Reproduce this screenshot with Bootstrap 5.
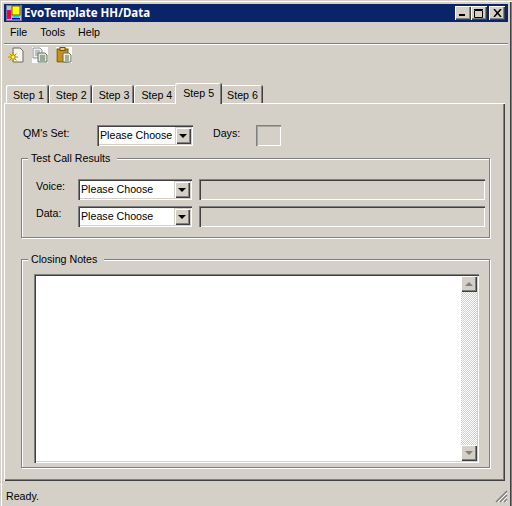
<!DOCTYPE html>
<html lang="en">
<head>
  <meta charset="UTF-8">
  <title>EvoTemplate HH/Data</title>
  <link href="https://cdn.jsdelivr.net/npm/bootstrap@5.3.3/dist/css/bootstrap.min.css" rel="stylesheet">
  <style>
    html, body { margin: 0; background: #d4d0c8; overflow: hidden; }
    body { font: 10.67px/14px "Liberation Sans", Arial, sans-serif; color: #000; }
    .win { width: 512px; height: 506px; padding: 4px 4px 0; background: #d4d0c8; box-shadow: inset 1px 1px #d4d0c8, inset 2px 2px #fff, inset -1px 0 #808080, inset -2px 0 #404040; }
    .titlebar { height: 18px; background: #0a246a; color: #fff; font: bold 11.5px/18px "Noto Sans", sans-serif; padding: 0 3px 0 2px; }
    .appicon { flex: none; margin-right: 2px; }
    .capbtn { width: 16px; height: 14px; background: #d4d0c8; box-shadow: inset 1px 1px #fff, inset -1px -1px #404040, inset -2px -2px #808080; }
    .capgap { margin-left: 2px; }
    .menubar { height: 22px; padding-top: 1px; box-shadow: 0 1px #fff, inset 0 -1px #808080; }
    .menubar span { padding: 0 6px; margin-right: 1px; line-height: 19px; }
    .toolbar { height: 39px; padding: 3px 0 0 4px; gap: 8px; }
    .toolbar svg { display: block; }
    .tabstrip { height: 20px; padding-left: 2px; align-items: flex-end; position: relative; z-index: 1; }
    .stab { height: 18px; padding: 3px 4px 0 7px; border-radius: 2px 2px 0 0; margin-right: 1px; box-shadow: inset 1px 1px #fff, inset -1px 0 #808080, 1px 0 #404040; line-height: 15px; }
    .stab.on { height: 21px; padding: 3px 7px 0 8px; margin: 0 -1px -1px -2px; background: #d4d0c8; position: relative; z-index: 1; }
    .tabpanel { width: 501px; height: 378px; padding: 22px 0 0 17px; box-shadow: inset 1px 1px #fff, inset -1px -1px #404040, inset -2px -2px #808080; }
    .toprow { margin-left: 2px; }
    .flabel { flex: none; padding-top: 1px; }
    .combo { height: 21px; background: #fff; padding: 2px 2px 2px 3px; line-height: 17px; white-space: nowrap; box-shadow: inset 1px 1px #808080, inset 2px 2px #404040, inset -1px -1px #fff, inset -2px -2px #d4d0c8; }
    .dropbtn { width: 16px; height: 17px; background: #d4d0c8; box-shadow: inset 1px 1px #d4d0c8, inset 2px 2px #fff, inset -1px -1px #404040, inset -2px -2px #808080; }
    .tri-d { width: 0; height: 0; border: 4px solid transparent; border-top-color: #000; border-bottom: 0; }
    .sunken { height: 21px; box-shadow: inset 1px 1px #808080, inset 2px 2px #404040, inset -1px -1px #fff; }
    .thin { box-shadow: inset 1px 1px #808080, inset 2px 2px #a8a49c, inset -1px -1px #fff; }
    .groupbox { width: 469px; border: 1px solid #808080; box-shadow: inset 1px 1px #fff, 1px 1px #fff; }
    .groupbox legend { float: none; width: auto; font-size: 10.67px; line-height: 14px; margin: 0 0 0 6px; padding: 0 7px 0 3px; background: #d4d0c8; }
    .notesbox { width: 445px; height: 189px; padding: 2px; box-shadow: inset 1px 1px #808080, inset 2px 2px #404040, inset -1px -1px #fff, inset -2px -2px #d4d0c8; }
    .notesarea { background: #fff; }
    .vscroll { width: 16px; background: repeating-conic-gradient(#fff 0 25%, #d4d0c8 0 50%) 0 0 / 2px 2px; }
    .sbtn { width: 16px; height: 16px; background: #d4d0c8; box-shadow: inset 1px 1px #fff, inset -1px -1px #404040, inset -2px -2px #808080; }
    .tri-u, .tri-n { width: 0; height: 0; border: 4px solid transparent; }
    .tri-u { border-bottom-color: #808080; border-top: 0; }
    .tri-n { border-top-color: #808080; border-bottom: 0; }
    .statusline { height: 25px; padding: 8px 0 0 2px; }
    .grip { margin: 0 0 3px 0; }
    .field-qm { width: 74px; }
    .field-qmbox { width: 96px; }
    .field-days { margin-left: 20px; width: 43px; }
    .field-daysbox { width: 25px; }
    .field-test { margin-top: 5px; height: 87px; }
    .field-rows { padding: 14px 0 0 14px; gap: 6px; }
    .field-vd { width: 42px; padding-top: 0; }
    .field-combo { width: 114px; }
    .field-result { width: 286px; margin-left: 7px; }
    .field-notes { margin-top: 14px; height: 216px; }
    .notes-wrap { padding: 8px 0 0 12px; }
  </style>
</head>
<body>
  <div class="win d-flex flex-column">
    <div class="titlebar d-flex align-items-center">
      <svg class="appicon" width="16" height="16" viewBox="0 0 16 16">
        <rect width="16" height="16" fill="#6c7c98"/>
        <rect x="1" y="1" width="14" height="14" fill="#c0c0c0"/>
        <rect x="1" y="5" width="4" height="9" fill="#e0007a"/>
        <rect x="2" y="7" width="2" height="4" fill="#f00"/>
        <rect x="6" y="1" width="8" height="9" fill="#ff0"/>
        <rect x="6" y="1" width="8" height="9" fill="none" stroke="#000" stroke-width=".6"/>
        <rect x="7" y="11" width="6" height="3" fill="#00e0f0"/>
        <rect x="6" y="13" width="8" height="1.5" fill="#0000c0"/>
      </svg>
      <span>EvoTemplate HH/Data</span>
      <div class="ms-auto d-flex align-items-center">
        <div class="capbtn d-flex align-items-end justify-content-center pb-1"><svg width="8" height="2"><rect width="6" height="2"/></svg></div>
        <div class="capbtn d-flex align-items-center justify-content-center"><svg width="10" height="9"><path d="M.5 1.500h8v7h-8z" fill="none" stroke="#000"/><path d="M0 .5h9" stroke="#000"/></svg></div>
        <div class="capbtn capgap d-flex align-items-center justify-content-center"><svg width="9" height="8"><path d="M1 0l7 8M8 0L1 8" stroke="#000" stroke-width="1.5"/></svg></div>
      </div>
    </div>

    <div class="menubar d-flex">
      <span>File</span><span>Tools</span><span>Help</span>
    </div>

    <div class="toolbar d-flex">
      <svg width="16" height="16" viewBox="0 0 16 16">
        <path d="M5 1h7l3 3v11H5z" fill="#f4f4ee" stroke="#6a6a60"/>
        <circle cx="5" cy="10" r="3" fill="#e8c800"/>
        <path d="M5 5v10M0 10h10M1.500 6.500l7 7M8.500 6.500l-7 7" stroke="#b89000"/>
        <circle cx="5" cy="10" r="1.500" fill="#fff080"/>
      </svg>
      <svg width="16" height="16" viewBox="0 0 16 16">
        <rect width="16" height="16" fill="#fff"/>
        <path d="M1 1h7l2 2v8H1z" fill="#f0f0f0" stroke="#909090"/>
        <path d="M3 4h5M3 6h5M3 8h5" stroke="#8090a0"/>
        <path d="M6 6h7l2 2v7H6z" fill="#e4e4dc" stroke="#607060"/>
        <path d="M8 9h5M8 11h5M8 13h5" stroke="#507050"/>
      </svg>
      <svg width="16" height="16" viewBox="0 0 16 16">
        <rect width="16" height="16" fill="#fff"/>
        <rect x="1" y="2" width="11" height="13" fill="#c89018" stroke="#705000"/>
        <rect x="4" y="0.500" width="5" height="3" fill="#e8d070" stroke="#705000"/>
        <path d="M7 6h6l2 2v7H7z" fill="#f0f0e8" stroke="#607060"/>
        <path d="M9 9h4M9 11h4M9 13h4" stroke="#507050"/>
      </svg>
    </div>

    <div class="tabstrip d-flex">
      <div class="stab">Step 1</div>
      <div class="stab">Step 2</div>
      <div class="stab">Step 3</div>
      <div class="stab">Step 4</div>
      <div class="stab on">Step 5</div>
      <div class="stab">Step 6</div>
    </div>

    <div class="tabpanel">
      <div class="toprow d-flex align-items-start">
        <div class="flabel field-qm">QM's Set:</div>
        <div class="combo d-flex justify-content-between field-qmbox">Please Choose<div class="dropbtn d-flex align-items-center justify-content-center"><div class="tri-d"></div></div></div>
        <div class="flabel field-days">Days:</div>
        <div class="sunken thin field-daysbox"></div>
      </div>

      <fieldset class="groupbox field-test">
        <legend>Test Call Results</legend>
        <div class="d-flex flex-column field-rows">
          <div class="d-flex align-items-start">
            <div class="flabel field-vd">Voice:</div>
            <div class="combo d-flex justify-content-between field-combo">Please Choose<div class="dropbtn d-flex align-items-center justify-content-center"><div class="tri-d"></div></div></div>
            <div class="sunken field-result"></div>
          </div>
          <div class="d-flex align-items-start">
            <div class="flabel field-vd">Data:</div>
            <div class="combo d-flex justify-content-between field-combo">Please Choose<div class="dropbtn d-flex align-items-center justify-content-center"><div class="tri-d"></div></div></div>
            <div class="sunken field-result"></div>
          </div>
        </div>
      </fieldset>

      <fieldset class="groupbox field-notes">
        <legend>Closing Notes</legend>
        <div class="notes-wrap">
          <div class="notesbox d-flex">
            <div class="notesarea flex-grow-1"></div>
            <div class="vscroll d-flex flex-column justify-content-between">
              <div class="sbtn d-flex align-items-center justify-content-center"><div class="tri-u"></div></div>
              <div class="sbtn d-flex align-items-center justify-content-center"><div class="tri-n"></div></div>
            </div>
          </div>
        </div>
      </fieldset>
    </div>

    <div class="statusline d-flex justify-content-between position-relative">
      <span>Ready.</span>
      <svg class="position-absolute end-0 bottom-0 grip" width="13" height="13" viewBox="0 0 13 13">
        <path d="M12 1L1 12M12 5L5 12M12 9L9 12" stroke="#808080" stroke-width="1.500"/>
        <path d="M12 3L3 12M12 7L7 12M12 11L11 12" stroke="#fff"/>
      </svg>
    </div>
  </div>
  <script src="https://cdn.jsdelivr.net/npm/bootstrap@5.3.3/dist/js/bootstrap.bundle.min.js"></script>
</body>
</html>
